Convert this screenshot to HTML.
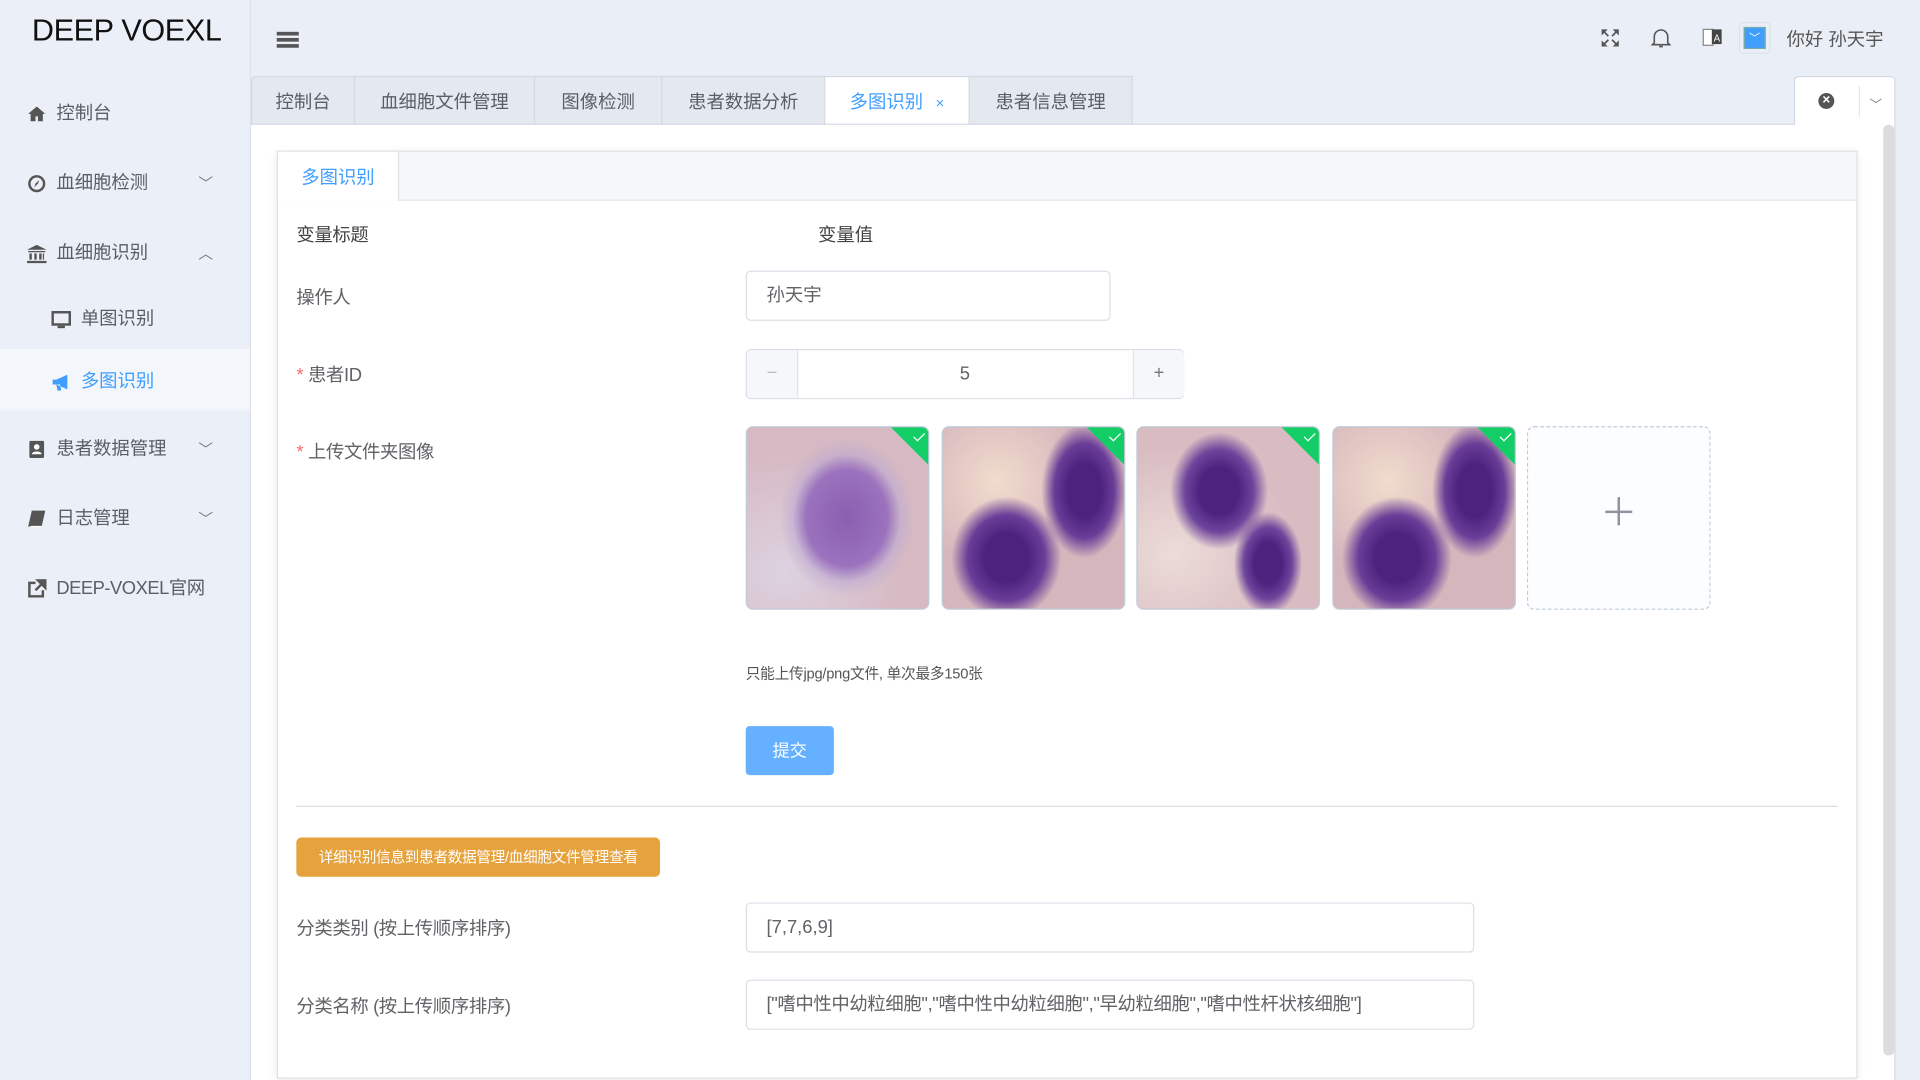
<!DOCTYPE html>
<html><head><meta charset="utf-8"><style>
html,body{margin:0;padding:0;width:1920px;height:1080px;overflow:hidden;background:#eaeef6}
#w{position:absolute;left:0;top:0;width:1568px;height:882px;transform:scale(1.22449);transform-origin:0 0;font-family:"Liberation Sans","Noto Sans CJK SC",sans-serif;color:#606266;font-size:15px}
.a{position:absolute}
.side{left:0;top:0;width:204px;height:882px;background:#ebeff7;border-right:1px solid #dde2ea}
.mi{position:absolute;left:0;width:204px;height:50px;line-height:50px;font-size:15px;color:#5a5e66}
.mi .ic{position:absolute;left:22px;top:17px;width:16px;height:16px}
.mi .t{position:absolute;left:46px}
.mi .ch{position:absolute;left:162px;top:0;font-size:12px;color:#777}
.tab{position:absolute;top:62px;height:40px;line-height:41px;text-align:center;background:#e4e9f0;border:1px solid #d3d9e3;border-bottom:none;box-sizing:border-box;color:#5a5e66;font-size:15px}
.inp{position:absolute;border:1px solid #dcdfe6;border-radius:4px;background:#fff;box-sizing:border-box;height:41px;line-height:40px;padding-left:16px;color:#606266}
.img{position:absolute;top:348px;width:150px;height:150px;border:1px solid #c0ccda;border-radius:6px;overflow:hidden;box-sizing:border-box;background:#d9bcc3}
.ok{position:absolute;right:-17px;top:-7px;width:46px;height:26px;background:#13ce66;transform:rotate(45deg)}
.ok:after{content:"";position:absolute;left:20px;top:10px;width:4px;height:8px;border:solid #fff;border-width:0 1.5px 1.5px 0}
.lbl{position:absolute;left:242px;font-size:15px;letter-spacing:-0.3px}
.star{color:#f56c6c;margin-right:4px}
</style></head><body><div id="w">
<div class="a side"></div>
<div class="a" style="left:26px;top:11px;font-size:25px;color:#111;letter-spacing:-0.3px">DEEP VOEXL</div>
<div class="a" style="left:226px;top:26px;width:18px;height:3px;background:#555;box-shadow:0 5px 0 #555,0 10px 0 #555"></div>

<div class="mi" style="top:68px"><svg class="ic" viewBox="0 0 16 16"><path d="M8 2L1 8h2v6h4v-4h2v4h4V8h2z" fill="#555"/></svg><span class="t">控制台</span></div>
<div class="mi" style="top:125px"><svg class="ic" viewBox="0 0 16 16"><circle cx="8" cy="8" r="6" fill="none" stroke="#555" stroke-width="2"/><path d="M10 5L7 8 6 11 9 8z" fill="#555"/></svg><span class="t">血细胞检测</span><span class="ch">﹀</span></div>
<div class="mi" style="top:182px"><svg class="ic" viewBox="0 0 16 16"><path d="M8 1L0 5h16zM1 6h14v1H1zM2 8h2v5H2zM6 8h2v5H6zM10 8h2v5h-2zM13 8h1v5h-1zM0 14h16v2H0z" fill="#555"/></svg><span class="t">血细胞识别</span><span class="ch">︿</span></div>
<div class="mi" style="top:236px"><svg class="ic" style="left:42px" viewBox="0 0 16 16"><rect x="1" y="2" width="14" height="10" fill="none" stroke="#555" stroke-width="2"/><rect x="5" y="13" width="6" height="2" fill="#555"/></svg><span class="t" style="left:66px">单图识别</span></div>
<div class="mi" style="top:285px;background:#f3f6fa;color:#409eff"><svg class="ic" style="left:42px;top:19px" viewBox="0 0 16 16"><path d="M1 6h3l9-4v12L4 10H1zM4 10l1 5h3l-1-5" fill="#409eff"/></svg><span class="t" style="left:66px;top:2px">多图识别</span></div>
<div class="mi" style="top:342px"><svg class="ic" viewBox="0 0 16 16"><rect x="2" y="1" width="12" height="14" rx="1" fill="#555"/><circle cx="8" cy="6" r="2.3" fill="#fff"/><path d="M4 12c0-3 8-3 8 0z" fill="#fff"/></svg><span class="t">患者数据管理</span><span class="ch">﹀</span></div>
<div class="mi" style="top:399px"><svg class="ic" viewBox="0 0 16 16"><path d="M4 1h11l-3 13H1z" fill="#555"/><path d="M3 14h9" stroke="#fff"/></svg><span class="t">日志管理</span><span class="ch">﹀</span></div>
<div class="mi" style="top:456px"><svg class="ic" viewBox="0 0 16 16"><path d="M7 3H2v11h11V9" fill="none" stroke="#555" stroke-width="2"/><path d="M9 1h6v6zM14 2L7 9" stroke="#555" stroke-width="2" fill="#555"/></svg><span class="t" style="letter-spacing:-0.4px">DEEP-VOXEL官网</span></div>

<svg class="a" style="left:1307px;top:23px" width="16" height="16" viewBox="0 0 16 16"><path d="M1 1h5L4 3l3 3-1 1-3-3-2 2zM15 1v5l-2-2-3 3-1-1 3-3-2-2zM1 15v-5l2 2 3-3 1 1-3 3 2 2zM15 15h-5l2-2-3-3 1-1 3 3 2-2z" fill="#555"/></svg>
<svg class="a" style="left:1348px;top:22px" width="17" height="18" viewBox="0 0 17 18"><path d="M3 13V8a5.5 5.5 0 0111 0v5l1.5 1.5h-14z M7 16h3" fill="none" stroke="#555" stroke-width="1.3"/></svg>
<svg class="a" style="left:1390px;top:22px" width="17" height="18" viewBox="0 0 17 18"><rect x="1" y="2" width="8" height="13" fill="#fff" stroke="#888"/><rect x="8" y="2" width="8" height="12" fill="#444"/><text x="9.5" y="12" font-size="8" fill="#fff" font-family="Liberation Sans">A</text></svg>
<div class="a" style="left:1420px;top:18px;width:26px;height:26px;border:1px solid #dfe3ea;border-radius:3px;box-sizing:border-box"><div style="margin:3px;width:18px;height:18px;background:#409eff;border:1px solid #7aa;box-sizing:border-box;color:#fff;font-size:9px;text-align:center;line-height:16px">﹀</div></div>
<div class="a" style="left:1459px;top:21px;font-size:15px;color:#555">你好 孙天宇</div>

<div class="tab" style="left:205px;width:85px;border-radius:4px 0 0 0">控制台</div>
<div class="tab" style="left:289px;width:148px">血细胞文件管理</div>
<div class="tab" style="left:436px;width:105px">图像检测</div>
<div class="tab" style="left:540px;width:134px">患者数据分析</div>
<div class="tab" style="left:673px;width:119px;background:#fff;color:#409eff">多图识别 <span style="font-size:12px;margin-left:6px">×</span></div>
<div class="tab" style="left:791px;width:134px">患者信息管理</div>
<div class="a" style="left:205px;top:101px;width:1260px;height:1px;background:#d3d9e3"></div>
<div class="a" style="left:1465px;top:62px;width:83px;height:40px;background:#fff;border:1px solid #d3d9e3;border-bottom:none;border-radius:4px 4px 0 0;box-sizing:border-box"></div>
<div class="a" style="left:1485px;top:76px;width:13px;height:13px;border-radius:50%;background:#555;color:#fff;font-size:11px;line-height:13px;text-align:center;font-weight:bold">×</div>
<div class="a" style="left:1518px;top:70px;width:1px;height:25px;background:#e5e8ee"></div>
<div class="a" style="left:1527px;top:77px;font-size:10px;color:#777">﹀</div>

<div class="a" style="left:205px;top:102px;width:1342px;height:780px;background:#fff;border-right:1px solid #d3d9e3"></div>
<div class="a" style="left:1538px;top:102px;width:9px;height:760px;background:#dcdcdc;border-radius:4px"></div>
<div class="a" style="left:226px;top:123px;width:1291px;height:758px;border:1px solid #dcdfe6;box-sizing:border-box;box-shadow:0 2px 8px rgba(0,0,0,.08)"></div>
<div class="a" style="left:227px;top:124px;width:1289px;height:39px;background:#f5f7fa;border-bottom:1px solid #e4e7ed"></div>
<div class="a" style="left:227px;top:124px;width:98px;height:40px;background:#fff;border-right:1px solid #dcdfe6;color:#409eff;line-height:44px;text-align:center">多图识别</div>

<div class="lbl" style="top:181px;color:#444">变量标题</div>
<div class="a" style="left:668px;top:181px;color:#444">变量值</div>
<div class="lbl" style="top:232px">操作人</div>
<div class="inp" style="left:609px;top:221px;width:298px">孙天宇</div>
<div class="lbl" style="top:295px"><span class="star">*</span>患者ID</div>
<div class="inp" style="left:609px;top:285px;width:358px;padding:0;text-align:center">5</div>
<div class="a" style="left:610px;top:286px;width:41px;height:39px;background:#f5f7fa;border-right:1px solid #dcdfe6;text-align:center;line-height:38px;color:#bbb;border-radius:4px 0 0 4px">−</div>
<div class="a" style="left:925px;top:286px;width:41px;height:39px;background:#f5f7fa;border-left:1px solid #dcdfe6;text-align:center;line-height:38px;color:#777;border-radius:0 4px 4px 0">+</div>
<div class="lbl" style="top:358px"><span class="star">*</span>上传文件夹图像</div>

<div class="img" style="left:609px;background:radial-gradient(ellipse 55px 65px at 55% 50%,#8a5fb0 0%,#9a72bd 60%,rgba(190,170,210,.6) 80%,transparent 100%),radial-gradient(ellipse at 20% 80%,#ddd2e0,transparent 60%),#d6b9c2"><div class="ok"></div></div>
<div class="img" style="left:769px;background:radial-gradient(ellipse 35px 55px at 78% 35%,#4b237f 40%,#6a3e98 70%,transparent 100%),radial-gradient(ellipse 45px 50px at 35% 72%,#4b237f 40%,#6a3e98 70%,transparent 100%),radial-gradient(ellipse at 30% 30%,#f0dccc,transparent 50%),#d6b6bd"><div class="ok"></div></div>
<div class="img" style="left:928px;background:radial-gradient(ellipse 40px 48px at 45% 35%,#4b237f 40%,#6e459c 70%,transparent 100%),radial-gradient(ellipse 28px 42px at 72% 75%,#4b237f 40%,#6e459c 70%,transparent 100%),radial-gradient(ellipse at 20% 70%,#ecdcd8,transparent 60%),#d8bcc2"><div class="ok"></div></div>
<div class="img" style="left:1088px;background:radial-gradient(ellipse 35px 55px at 78% 35%,#4b237f 40%,#6a3e98 70%,transparent 100%),radial-gradient(ellipse 45px 50px at 35% 72%,#4b237f 40%,#6a3e98 70%,transparent 100%),radial-gradient(ellipse at 30% 30%,#f0dccc,transparent 50%),#d6b6bd"><div class="ok"></div></div>
<div class="a" style="left:1247px;top:348px;width:150px;height:150px;border:1px dashed #c0ccda;border-radius:6px;box-sizing:border-box;background:#fbfdff"></div>
<div class="a" style="left:1311px;top:417px;width:22px;height:1.5px;background:#8c939d"></div>
<div class="a" style="left:1321px;top:406px;width:1.5px;height:23px;background:#8c939d"></div>

<div class="a" style="left:609px;top:541px;font-size:12px;color:#555;letter-spacing:-0.2px">只能上传jpg/png文件, 单次最多150张</div>
<div class="a" style="left:609px;top:593px;width:72px;height:40px;background:#66b1ff;border-radius:3px;color:#fff;text-align:center;line-height:40px;font-size:14px">提交</div>
<div class="a" style="left:242px;top:658px;width:1259px;height:1px;background:#dcdfe6"></div>
<div class="a" style="left:242px;top:684px;width:297px;height:32px;background:#e6a23c;border-radius:4px;color:#fff;font-size:12px;line-height:32px;text-align:center;letter-spacing:-0.3px">详细识别信息到患者数据管理/血细胞文件管理查看</div>
<div class="lbl" style="top:747px">分类类别 (按上传顺序排序)</div>
<div class="inp" style="left:609px;top:737px;width:595px">[7,7,6,9]</div>
<div class="lbl" style="top:811px">分类名称 (按上传顺序排序)</div>
<div class="inp" style="left:609px;top:800px;width:595px;letter-spacing:-0.3px">["嗜中性中幼粒细胞","嗜中性中幼粒细胞","早幼粒细胞","嗜中性杆状核细胞"]</div>
</div></body></html>
